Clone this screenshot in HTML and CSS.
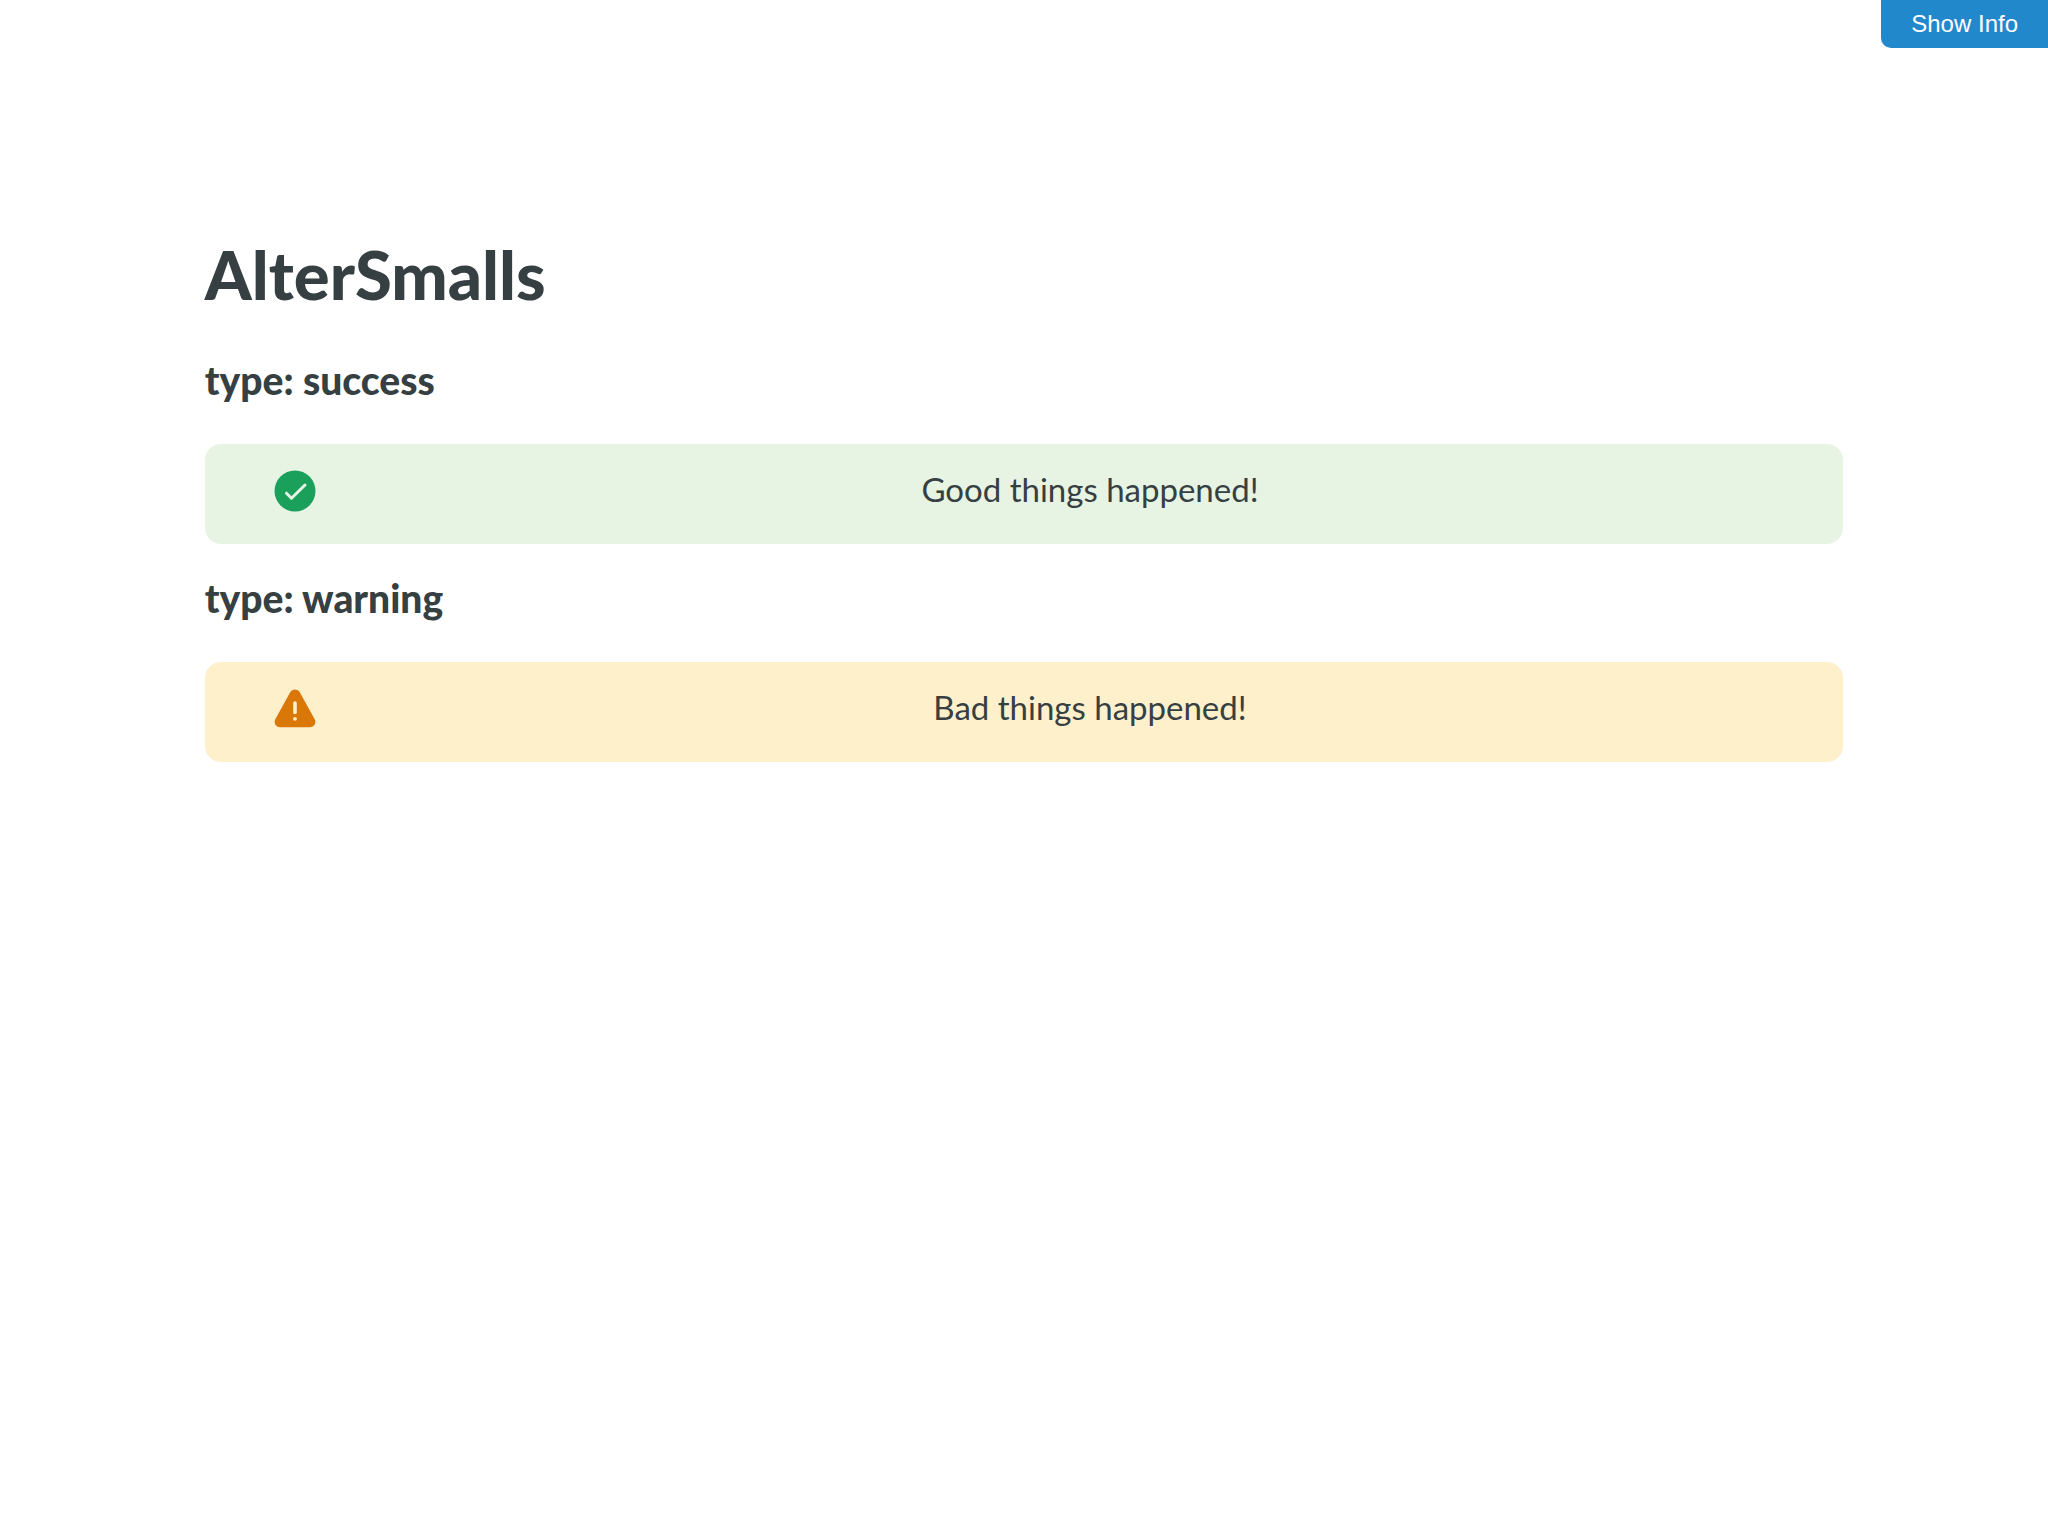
FILE: index.html
```html
<!DOCTYPE html>
<html lang="en">
<head>
<meta charset="utf-8">
<meta name="viewport" content="width=device-width, initial-scale=1">
<title>AlterSmalls</title>
<link rel="stylesheet" href="styles.css">
</head>
<body>
<header class="toolbar">
  <button class="info-button" type="button">Show Info</button>
</header>
<main class="page">
  <h1 class="title">AlterSmalls</h1>
  <section class="example">
    <h2 class="subtitle">type: success</h2>
    <div class="alert alert-success" role="status">
      <svg class="icon" viewBox="0 0 42 42" aria-hidden="true">
        <circle cx="21" cy="21" r="20.5" fill="#1aa05b"/>
        <path d="M12.5 23.2l5 5L31 15" fill="none" stroke="#e7f4e3" stroke-width="3" stroke-linecap="round" stroke-linejoin="round"/>
      </svg>
      <p class="message">Good things happened!</p>
    </div>
  </section>
  <section class="example">
    <h2 class="subtitle">type: warning</h2>
    <div class="alert alert-warning" role="alert">
      <svg class="icon" viewBox="0 0 42 42" aria-hidden="true">
        <path d="M16.2 4.3C18.3.5 23.7.5 25.8 4.3L40.7 31.2C42.6 34.8 40.2 39.2 36 39.2H6C1.8 39.2-.6 34.8 1.3 31.2Z" fill="#d97708"/>
        <path d="M21 15v9.5" stroke="#fff0cc" stroke-width="3.6" stroke-linecap="round"/>
        <circle cx="21" cy="30.8" r="1.9" fill="#fff0cc"/>
      </svg>
      <p class="message">Bad things happened!</p>
    </div>
  </section>
</main>
</body>
</html>
```
FILE: styles.css
```css
* {
  box-sizing: border-box;
}

body {
  margin: 0;
  background: #fff;
  color: #363f42;
  font-family: Lato, sans-serif;
}

.toolbar {
  display: flex;
  justify-content: flex-end;
}

.info-button {
  padding: 10px 30px;
  border: 0;
  border-radius: 0 0 0 10px;
  background: #2288cc;
  color: #fff;
  font: 24px/28px "Liberation Sans", Arial, sans-serif;
  cursor: pointer;
}

.page {
  padding: 186px 10% 48px;
}

.title {
  margin: 0 0 42px;
  font-size: 67px;
  line-height: 80px;
  font-weight: 900;
}

.example {
  margin-bottom: 30px;
}

.subtitle {
  margin: 0 0 40px;
  font-size: 39px;
  line-height: 48px;
  font-weight: 900;
}

.alert {
  display: grid;
  grid-template-columns: 84px 1fr;
  column-gap: 48px;
  align-items: start;
  padding: 26px 48px 32px;
  border-radius: 16px;
}

.alert-success {
  background: #e7f4e3;
}

.alert-warning {
  background: #fff0cc;
}

.icon {
  width: 42px;
  height: 42px;
  justify-self: center;
}

.message {
  margin: 0;
  font-size: 33px;
  line-height: 38px;
  text-align: center;
}
```
